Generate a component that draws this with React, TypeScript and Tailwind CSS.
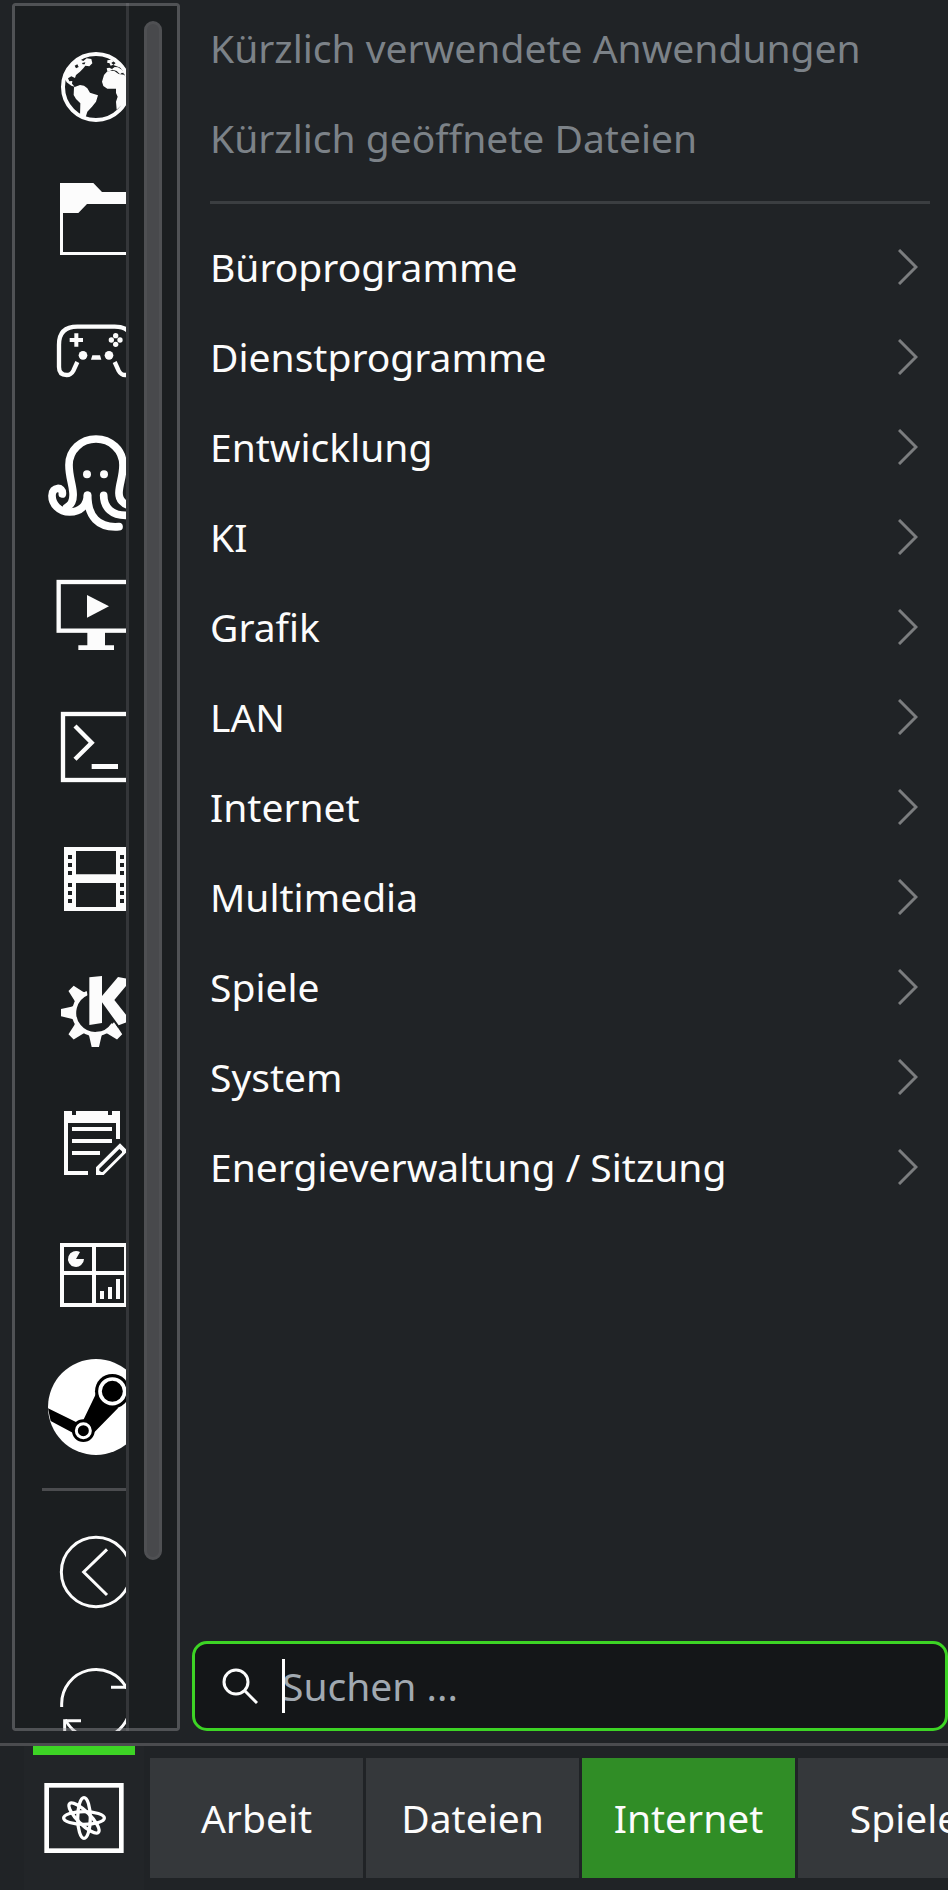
import type { ReactNode } from "react";

const INK = "#fcfcfc";
const PANEL = "#1b1e20";

// All favourites share one 288 unit grid, drawn at 96px
function Icon({ children }: { children: ReactNode }) {
    return (
        <svg viewBox="0 0 288 288" className="size-24 shrink-0" fill={INK} aria-hidden="true">
            {children}
        </svg>
    );
}

function GlobeIcon() {
    return (
        <Icon>
            <circle cx="144" cy="144" r="99" fill="none" stroke={INK} strokeWidth="12" />
            <path d="M50 118 L54 92 L78 66 L98 62 L106 66 L116 58 L130 60 L133 73 L124 82 L112 80 L106 88 L96 98 L84 108 L81 117 L70 112 L60 118 L64 127 L73 126 L72 134 L80 143 L70 140 L56 130Z" />
            <path d="M78 145 L96 138 L108 140 L118 148 L126 161 L150 169 L144 188 L132 203 L118 218 L112 238 L96 232 L97 193 L84 180 L77 168Z" />
            <path d="M162 128 L168 108 L178 97 L198 95 L212 105 L228 107 L238 118 L246 140 L240 180 L206 212 L204 188 L209 173 L204 162 L204 149 L178 149 L166 141Z" />
            <path d="M176 88 L184 86 L192 90 L200 84 L210 85 L222 92 L230 104 L222 101 L216 106 L206 96 L194 92 L186 96 L178 96Z" />
            <path d="M178 64 L190 62 L198 66 L190 72 L196 77 L188 80 L184 72 L178 72Z M196 78 L206 70 L226 80 L238 106 L222 88Z" />
            <path d="M80 80 L88 76 L92 84 L84 88Z M102 72 L112 70 L110 76 L104 76Z" fill={PANEL} />
        </Icon>
    );
}

function FolderIcon() {
    return (
        <Icon>
            <path fillRule="evenodd" d="M36 36 H136 L162 63 H252 V252 H36Z M45 126 H91 L117 99 H243 V243 H45Z" />
        </Icon>
    );
}

function GamepadIcon() {
    return (
        <Icon>
            <path
                d="M88 177 L76 203 Q69 216 56 216 Q33 216 33 192 V125 Q33 71 88 71 H200 Q255 71 255 125 V192 Q255 216 232 216 Q219 216 212 203 L200 177"
                fill="none"
                stroke={INK}
                strokeWidth="13"
            />
            <path d="M79 91 H91 V105 H105 V117 H91 V131 H79 V117 H65 V105 H79Z" />
            <circle cx="203" cy="98" r="8" />
            <circle cx="203" cy="124" r="8" />
            <circle cx="190" cy="111" r="8" />
            <circle cx="216" cy="111" r="8" />
            <circle cx="105" cy="157" r="13" />
            <circle cx="183" cy="157" r="13" />
            <path d="M133 157 H156 L160 170 H129Z" />
        </Icon>
    );
}

function OctopusIcon() {
    return (
        <Icon>
            <g fill="none" stroke="#fff" strokeWidth="23" strokeLinecap="round">
                <path d="M56 217 C70 210 77 194 75 172 C73 145 63 125 63 90 C63 45 100 12 144 12 C188 12 225 45 225 90 C225 125 214 145 213 172 C212 194 226 208 246 212" />
                <path d="M118 181 C118 210 98 231 65 231 C32 231 12 206 12 182 C12 154 46 154 43 177" />
                <path d="M119 181 C119 244 150 280 213 275" />
                <path d="M167 181 C167 218 192 242 236 241" />
            </g>
            <circle cx="117" cy="118" r="12" />
            <circle cx="168" cy="118" r="12" />
        </Icon>
    );
}

function ScreenIcon() {
    return (
        <Icon>
            <rect x="32" y="45" width="224" height="146" fill="none" stroke={INK} strokeWidth="13" />
            <path d="M117 84 L183 118 L117 152Z" />
            <path d="M118 191 H171 V235 H198 V249 H91 V235 H118Z" />
        </Icon>
    );
}

function TerminalIcon() {
    return (
        <Icon>
            <rect x="45" y="45" width="198" height="198" fill="none" stroke={INK} strokeWidth="13" />
            <path d="M81 81 L131 131 L81 181" fill="none" stroke={INK} strokeWidth="13" />
            <path d="M131 195 H210 V210 H131Z" />
        </Icon>
    );
}

function FilmIcon() {
    return (
        <Icon>
            <path
                fillRule="evenodd"
                d="M48 48 H240 V240 H48Z M84 60 V130 H204 V60Z M84 156 V228 H204 V156Z M60 72 V84 H72 V72Z M60 96 V108 H72 V96Z M60 120 V132 H72 V120Z M60 156 V168 H72 V156Z M60 180 V192 H72 V180Z M60 204 V216 H72 V204Z M216 72 V84 H228 V72Z M216 96 V108 H228 V96Z M216 120 V132 H228 V120Z M216 156 V168 H228 V156Z M216 180 V192 H228 V180Z M216 204 V216 H228 V204Z"
            />
        </Icon>
    );
}

function KdeIcon() {
    const tooth = "M-103 -11 V11 L-72 18 L-60 22 V-22 L-72 -18Z";
    return (
        <Icon>
            <g transform="translate(142 149)">
                <path d="M-24 -59 A64 64 0 1 0 54 35" fill="none" stroke={INK} strokeWidth="13" />
                {[0, 45, -45, -90, -135].map((angle) => (
                    <path key={angle} d={tooth} transform={`rotate(${angle})`} />
                ))}
            </g>
            <g stroke={PANEL} strokeWidth="12" paintOrder="stroke">
                <path d="M124 43 L162 39 V180 L124 186Z M162 99 L210 42 L250 50 L199 111 L248 173 L212 187 L162 118Z" />
            </g>
        </Icon>
    );
}

function NotesIcon() {
    return (
        <Icon>
            <path d="M48 48 H72 V60 H84 V48 H180 V60 H192 V48 H216 V132 H204 V84 H60 V228 H120 V240 H48Z" />
            <path d="M72 96 H192 V108 H72Z M72 132 H192 V144 H72Z M72 168 H156 V180 H72Z" />
            <path fillRule="evenodd" d="M144 217 L216 145 L239 168 L167 240 H144Z M154 221 V227 L160 231 H164 L222 173 V169 L214 162Z" />
        </Icon>
    );
}

function DashboardIcon() {
    return (
        <Icon>
            <path fillRule="evenodd" d="M36 48 H240 V240 H36Z M48 60 V132 H132 V60Z M144 60 V132 H228 V60Z M48 144 V228 H132 V144Z M144 144 V228 H228 V144Z" />
            <path d="M84 96 H108 A24 24 0 1 1 96 75Z" />
            <path d="M156 192 H168 V216 H156Z M180 180 H192 V216 H180Z M204 156 H216 V216 H204Z" />
        </Icon>
    );
}

function SteamIcon() {
    return (
        <Icon>
            <circle cx="144" cy="144" r="144" fill="#fff" />
            <g fill="#000">
                <path d="M0 148 L84 189 L106 183 L144 104 L211 146 L139 220 L106 240 L74 221 L8 186Z" />
                <circle cx="193" cy="97" r="52" />
                <circle cx="106" cy="215" r="34" />
            </g>
            <circle cx="193" cy="97" r="37" fill="none" stroke="#fff" strokeWidth="11" />
            <circle cx="106" cy="215" r="21" fill="none" stroke="#fff" strokeWidth="9" />
        </Icon>
    );
}

function BackIcon() {
    return (
        <Icon>
            <g fill="none" stroke={INK} strokeWidth="9">
                <circle cx="144" cy="144" r="104" />
                <path d="M177 76 L107 144 L177 213" />
            </g>
        </Icon>
    );
}

function RefreshIcon() {
    return (
        <Icon>
            <g fill="none" stroke={INK} strokeWidth="9">
                <path d="M41 153 V144 A103 103 0 0 1 236 97" />
                <path d="M189 94 H239 V45" />
                <path d="M247 135 V144 A103 103 0 0 1 52 191" />
                <path d="M99 194 H50 V243" />
            </g>
        </Icon>
    );
}

function AtomIcon() {
    return (
        <svg viewBox="0 0 240 210" className="h-[70px] w-20" fill="none" stroke="#fff" aria-hidden="true">
            <rect x="8" y="7" width="224" height="196" strokeWidth="14" />
            <g strokeWidth="10">
                <ellipse cx="120" cy="105" rx="61" ry="19" />
                <ellipse cx="120" cy="105" rx="19" ry="61" />
                <ellipse cx="120" cy="105" rx="61" ry="19" transform="rotate(45 120 105)" />
            </g>
        </svg>
    );
}

function Chevron() {
    return (
        <svg viewBox="0 0 20 36" className="h-9 w-5 shrink-0" fill="none" stroke="#7b7d7f" strokeWidth="3" aria-hidden="true">
            <path d="M1 1 L18 18 L1 35" />
        </svg>
    );
}

const favourites = [
    { name: "Webbrowser", icon: <GlobeIcon /> },
    { name: "Dateiverwaltung", icon: <FolderIcon /> },
    { name: "Spiele", icon: <GamepadIcon /> },
    { name: "Octopus", icon: <OctopusIcon /> },
    { name: "Videowiedergabe", icon: <ScreenIcon /> },
    { name: "Terminal", icon: <TerminalIcon /> },
    { name: "Videoschnitt", icon: <FilmIcon /> },
    { name: "KDE", icon: <KdeIcon /> },
    { name: "Texteditor", icon: <NotesIcon /> },
    { name: "Systemmonitor", icon: <DashboardIcon /> },
    { name: "Steam", icon: <SteamIcon /> },
];

const sessionActions = [
    { name: "Abmelden", icon: <BackIcon /> },
    { name: "Neu starten", icon: <RefreshIcon /> },
];

const recent = ["Kürzlich verwendete Anwendungen", "Kürzlich geöffnete Dateien"];

const categories = [
    "Büroprogramme",
    "Dienstprogramme",
    "Entwicklung",
    "KI",
    "Grafik",
    "LAN",
    "Internet",
    "Multimedia",
    "Spiele",
    "System",
    "Energieverwaltung / Sitzung",
];

const desktops = ["Arbeit", "Dateien", "Internet", "Spiele"];

function IconList({ items }: { items: { name: string; icon: ReactNode }[] }) {
    return (
        <div className="flex flex-col gap-9 pl-9">
            {items.map((item) => (
                <button key={item.name} aria-label={item.name} className="size-24 shrink-0">
                    {item.icon}
                </button>
            ))}
        </div>
    );
}

function Sidebar() {
    return (
        <aside className="relative flex w-[168px] shrink-0 overflow-hidden rounded-[3px] bg-[#1b1e20]">
            <div className="w-[114px] shrink-0 overflow-hidden pt-9">
                <IconList items={favourites} />
                <div className="my-[33px] ml-[30px] h-[3px] bg-[#4b4c4f]" />
                <IconList items={sessionActions} />
            </div>
            <div className="flex flex-1 border-l-3 border-[#343639] pt-[18px] pl-[15px]">
                <div className="h-[90%] w-[18px] rounded-full border-3 border-[#4f5053] bg-[#48494c]" />
            </div>
            <div className="pointer-events-none absolute inset-0 rounded-[3px] border-3 border-[#a0a1a6]/40" />
        </aside>
    );
}

function Menu() {
    return (
        <nav className="flex flex-col px-[18px]">
            {recent.map((label) => (
                <button key={label} disabled className="h-[90px] text-left whitespace-nowrap text-[#7c8288]">
                    {label}
                </button>
            ))}
            <hr className="my-[18px] border-t-3 border-[#3b3e41]" />
            {categories.map((label) => (
                <button key={label} className="flex h-[90px] items-center justify-between pr-3 text-left whitespace-nowrap">
                    {label}
                    <Chevron />
                </button>
            ))}
        </nav>
    );
}

function Search() {
    return (
        <label className="mt-auto flex h-[90px] items-center rounded-[15px] border-3 border-[#3dd425] bg-[#141618] pl-[27px]">
            <svg viewBox="0 0 36 36" className="size-9 shrink-0" fill="none" stroke={INK} strokeWidth="3" aria-hidden="true">
                <circle cx="14" cy="14" r="12" />
                <path d="M22 22 L35 35" />
            </svg>
            <span className="relative ml-6 flex flex-1">
                <input
                    type="text"
                    aria-label="Suchen"
                    placeholder="Suchen ..."
                    className="h-[54px] w-full bg-transparent outline-none placeholder:text-[#a1a9b1]"
                />
                <span className="absolute inset-y-0 left-0 w-[3px] bg-white" />
            </span>
        </label>
    );
}

function Taskbar() {
    return (
        <footer className="flex h-[147px] shrink-0 overflow-hidden border-t-3 border-[#4b4c4f] pl-6">
            <button aria-label="Anwendungsmenü" className="flex w-[120px] shrink-0 flex-col items-center bg-[#222528]">
                <span className="h-[9px] w-[102px] bg-[#3dd425]" />
                <span className="mt-7">
                    <AtomIcon />
                </span>
            </button>
            <div className="flex gap-[3px] py-3 pl-1.5">
                {desktops.map((name) => (
                    <button
                        key={name}
                        className={
                            name === "Internet"
                                ? "w-[213px] shrink-0 bg-[#308d26]"
                                : "w-[213px] shrink-0 bg-[#35383b]"
                        }
                    >
                        {name}
                    </button>
                ))}
            </div>
        </footer>
    );
}

export default function App() {
    return (
        <div className="flex h-screen flex-col overflow-hidden bg-[#202326] font-['Noto_Sans',sans-serif] text-[39px] text-[#fcfcfc]">
            <main className="flex min-h-0 flex-1 gap-3 pt-[3px] pb-3 pl-3">
                <Sidebar />
                <div className="flex min-w-0 flex-1 flex-col">
                    <Menu />
                    <Search />
                </div>
            </main>
            <Taskbar />
        </div>
    );
}
